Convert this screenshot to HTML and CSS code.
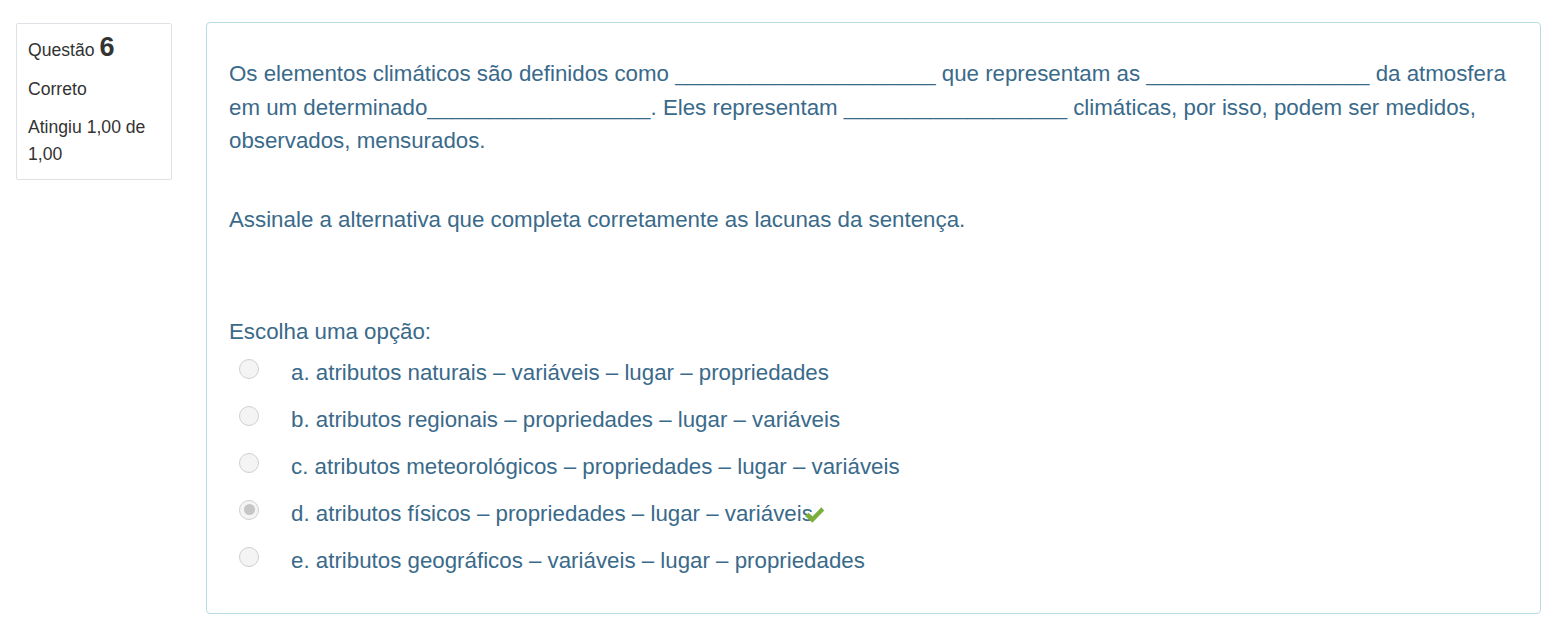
FILE: index.html
```html
<!DOCTYPE html>
<html lang="pt">
<head>
<meta charset="utf-8">
<link rel="stylesheet" href="styles.css">
</head>
<body>
<div class="que">
  <div class="info">
    <h3 class="no">Questão <span class="qno">6</span></h3>
    <div class="state">Correto</div>
    <div class="grade">Atingiu 1,00 de 1,00</div>
  </div>
  <div class="content">
    <div class="qtext">
      <p>Os elementos climáticos são definidos como _____________________ que representam as __________________ da atmosfera em um determinado__________________. Eles representam __________________ climáticas, por isso, podem ser medidos, observados, mensurados.</p>
      <p class="spaced">Assinale a alternativa que completa corretamente as lacunas da sentença.</p>
    </div>
    <div class="ablock">
      <div class="prompt">Escolha uma opção:</div>
      <div class="answer">
        <div class="opt"><span class="radio"></span><span class="label">a. atributos naturais – variáveis – lugar – propriedades</span></div>
        <div class="opt"><span class="radio"></span><span class="label">b. atributos regionais – propriedades – lugar – variáveis</span></div>
        <div class="opt"><span class="radio"></span><span class="label">c. atributos meteorológicos – propriedades – lugar – variáveis</span></div>
        <div class="opt"><span class="radio checked"></span><span class="label">d. atributos físicos – propriedades – lugar – variáveis<svg class="tick" width="21" height="18" viewBox="0 0 20 17"><path d="M1 9.5 L4.3 6.4 L8 10 L16.5 1.2 L19.3 4.2 L8 15.8 Z" fill="#7bae3a"/></svg></span></div>
        <div class="opt"><span class="radio"></span><span class="label">e. atributos geográficos – variáveis – lugar – propriedades</span></div>
      </div>
    </div>
  </div>
</div>
</body>
</html>
```

FILE: styles.css
```css
html, body {
  margin: 0;
  padding: 0;
  background: #fff;
}
body {
  font-family: "Liberation Sans", Arial, sans-serif;
}
.que {
  display: flex;
  align-items: flex-start;
  padding: 22px 0 0 16px;
}
.info {
  box-sizing: border-box;
  width: 156px;
  margin-top: 1px;
  padding: 10px 8px 11px 11px;
  border: 1px solid #dee2e6;
  border-radius: 2px;
  background: #fff;
  color: #333;
  font-size: 17.6px;
  line-height: 27px;
}
.no {
  margin: 0 0 12px;
  font-size: 17.6px;
  font-weight: normal;
  line-height: 27px;
}
.qno {
  font-size: 27px;
  font-weight: bold;
  line-height: 27px;
}
.state {
  margin-bottom: 11px;
}
.content {
  box-sizing: border-box;
  width: 1335px;
  height: 592px;
  margin-left: 34px;
  padding: 34px 22px 0 22px;
  border: 1px solid #b8dce2;
  border-radius: 4px;
  color: #3a6a8a;
  font-size: 22.3px;
  line-height: 33.5px;
}
.qtext p {
  margin: 0;
}
.qtext .spaced {
  margin-top: 45.5px;
}
.ablock {
  margin-top: 78.5px;
}
.prompt {
  margin-bottom: 7px;
}
.answer {
  display: flex;
  flex-direction: column;
  gap: 13.5px;
}
.opt {
  display: flex;
  align-items: center;
  height: 33.5px;
}
.radio {
  box-sizing: border-box;
  width: 20px;
  height: 20px;
  margin: -7px 0 0 10px;
  border: 1px solid #cfcfcf;
  border-radius: 50%;
  background: #f4f4f4;
  flex: none;
  position: relative;
}
.radio.checked::after {
  content: "";
  position: absolute;
  left: 3.5px;
  top: 3.5px;
  width: 11px;
  height: 11px;
  border-radius: 50%;
  background: #c6c6c6;
}
.label {
  margin-left: 32px;
  position: relative;
}
.tick {
  position: absolute;
  right: -12px;
  top: 9px;
}
```
